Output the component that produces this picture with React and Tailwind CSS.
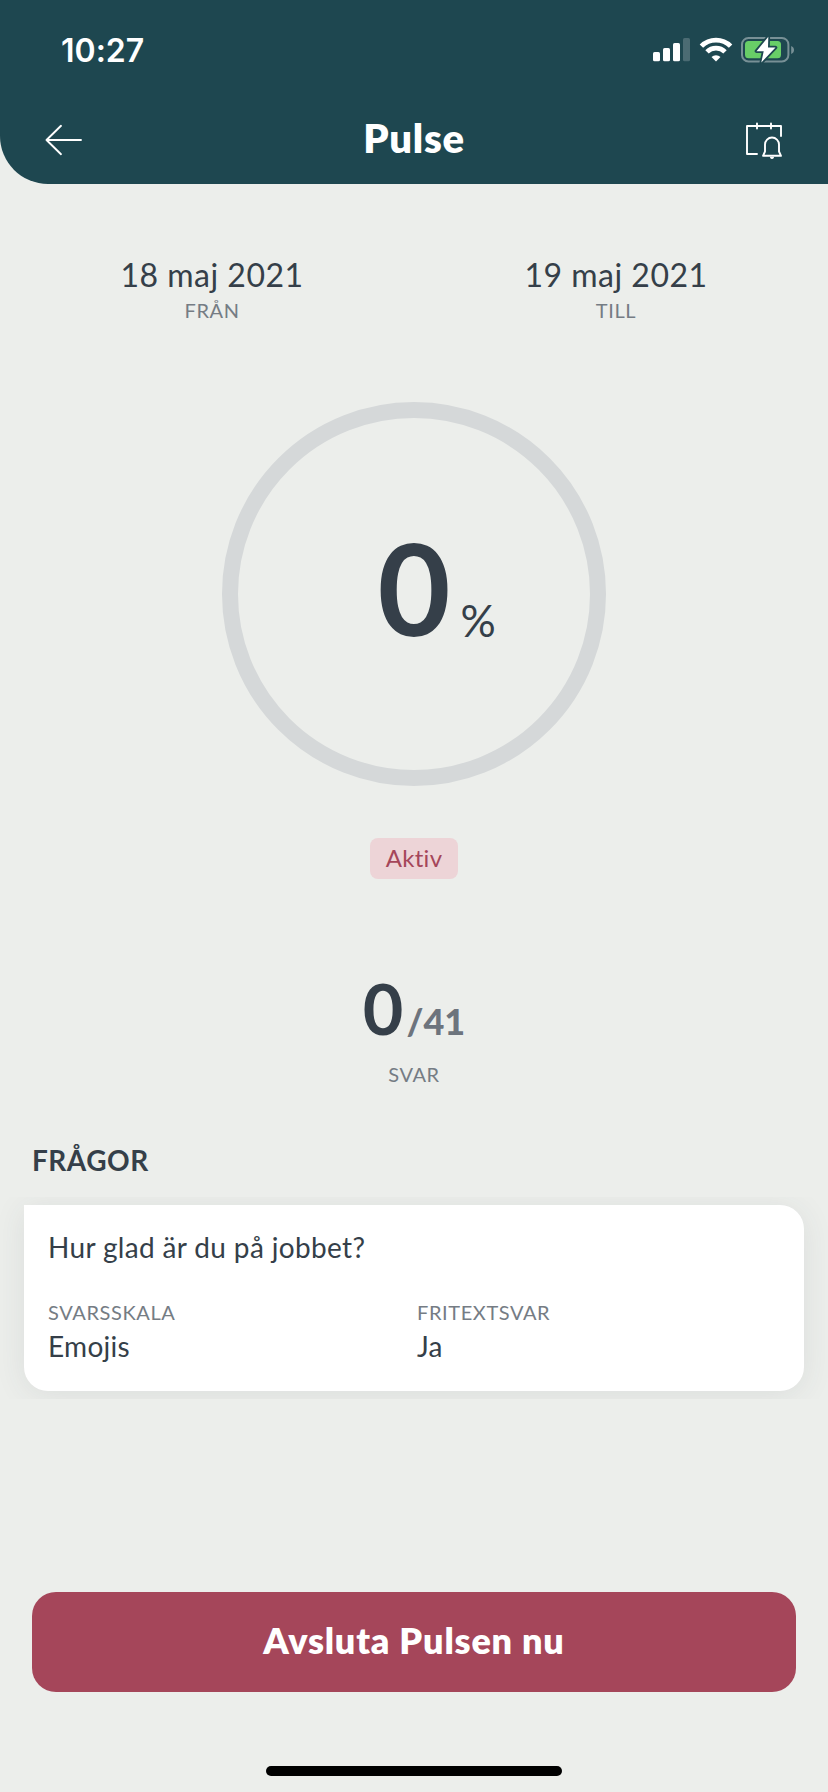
import React from 'react';

const SignalIcon = () => (
  <svg width="38" height="24" viewBox="0 0 38 24">
    <rect x="0" y="14" width="7" height="9.3" rx="1.6" fill="#fff" />
    <rect x="10" y="10" width="7" height="13.3" rx="1.6" fill="#fff" />
    <rect x="20" y="5" width="7" height="18.3" rx="1.6" fill="#fff" />
    <rect x="30" y="0" width="7" height="23.3" rx="1.6" fill="#fff" fillOpacity="0.2" />
  </svg>
);

const WifiIcon = () => (
  <svg width="34" height="26" viewBox="0 0 34 26" fill="none" stroke="#fff" strokeWidth="4.8">
    <path d="M2.4 9.1a20.6 20.6 0 0 1 29.2 0" />
    <path d="M8 14.9a12.8 12.8 0 0 1 18 0" />
    <path d="M17 24.6l-4.500-4.500a6.400 6.400 0 0 1 9 0z" fill="#fff" stroke="none" />
  </svg>
);

const BatteryIcon = () => (
  <svg width="54" height="28" viewBox="0 0 54 28">
    <rect x="1" y="2" width="46.4" height="23.4" rx="6.5" fill="none" stroke="#fff" strokeOpacity="0.4" strokeWidth="2" />
    <path d="M50.2 10v8c1.8-.7 2.8-2.2 2.8-4s-1-3.3-2.8-4z" fill="#fff" fillOpacity="0.4" />
    <rect x="4" y="5" width="36" height="17.3" rx="3.5" fill="#68ce67" />
    <path
      d="M27.3 .8L15.5 15.2h7.2L20.3 26.5 34.5 11.500h-7.500z"
      fill="#fff"
      stroke="#1e4750"
      strokeWidth="3.6"
      strokeLinejoin="round"
      paintOrder="stroke"
    />
  </svg>
);

const BackIcon = () => (
  <svg width="38" height="32" viewBox="0 0 38 32" fill="none" stroke="#fff" strokeWidth="1.9" strokeLinecap="round" strokeLinejoin="round">
    <path d="M36 16H1.5M16 1.8L1.5 16 16 30.2" />
  </svg>
);

const ReminderIcon = () => (
  <svg width="38" height="38" viewBox="0 0 38 38" fill="none" stroke="#fff" strokeWidth="1.9" strokeLinecap="round" strokeLinejoin="round">
    <path d="M12 32H2V4h34v10M12 1.5v5M26 1.5v5" />
    <path d="M20 29.5v-7a7 7 0 0 1 14 0v7l2 4.3H18z" />
    <path d="M26 35.5a1.2 1.2 0 0 0 2 0" />
  </svg>
);

const DateColumn = ({ date, label }) => (
  <div className="flex flex-1 flex-col items-center">
    <span className="text-[32px] leading-10 tracking-[0.5px]">{date}</span>
    <span className="mt-px text-xl leading-7 tracking-[0.6px] text-[#757c84]">{label}</span>
  </div>
);

const Detail = ({ label, value }) => (
  <div className="flex flex-col">
    <span className="text-xl leading-7 tracking-[0.6px] text-[#757c84]">{label}</span>
    <span className="mt-0.5 text-[28px] leading-9 tracking-[0.3px]">{value}</span>
  </div>
);

const App = () => {
  return (
    <div className="flex h-[1792px] w-[828px] flex-col overflow-hidden bg-[#eceeeb] font-['Lato',sans-serif] text-[#353f49] [font-variant-ligatures:none]">
      <header className="h-[184px] rounded-bl-[48px] bg-[#1e4750] text-white">
        <div className="flex h-[100px] items-center justify-between pr-[33px] pl-[61px]">
          <span className="mt-px font-['Inter',sans-serif] text-[32px] leading-10 font-semibold">10:27</span>
          <div className="flex items-center">
            <SignalIcon />
            <div className="ml-2"><WifiIcon /></div>
            <div className="ml-2"><BatteryIcon /></div>
          </div>
        </div>
        <div className="flex h-20 items-center justify-between px-[45px]">
          <BackIcon />
          <h1 className="-mt-1 text-[40px] leading-none font-extrabold tracking-[0.7px]">Pulse</h1>
          <div className="pt-px"><ReminderIcon /></div>
        </div>
      </header>

      <div className="mt-[71px] flex px-2.5">
        <DateColumn date="18 maj 2021" label="FRÅN" />
        <DateColumn date="19 maj 2021" label="TILL" />
      </div>

      <div className="mt-[78px] flex size-[384px] items-center justify-center self-center rounded-full border-[16px] border-[#d5d8d9] pb-3">
        <div className="relative text-[126px] leading-none font-bold">
          0
          <span className="absolute bottom-[9px] left-full ml-2.5 text-[44px] leading-none font-normal">%</span>
        </div>
      </div>

      <div className="mt-[52px] flex h-[41px] w-[88px] items-center justify-center self-center rounded-lg bg-[#edd4d7] pb-0.5 text-2xl leading-none tracking-[0.3px] text-[#a5465a]">
        Aktiv
      </div>

      <div className="mt-[94px] flex h-[71px] items-baseline justify-center leading-[71px]">
        <span className="text-[70px] font-bold">0</span>
        <span className="ml-[3px] text-4xl leading-none font-black text-[#6d747d]">/41</span>
      </div>
      <div className="mt-4 text-center text-xl leading-7 tracking-[0.6px] text-[#757c84]">SVAR</div>

      <h2 className="mt-[54px] px-8 text-[28px] leading-9 font-bold tracking-[0.5px]">FRÅGOR</h2>

      <div className="mt-[19px] overflow-hidden px-6 py-2">
        <div className="h-[186px] rounded-3xl rounded-tl-none bg-white px-6 pt-6 shadow-[0_4px_32px_rgba(53,63,73,0.09)]">
          <p className="text-[28px] leading-9 tracking-[0.35px]">Hur glad är du på jobbet?</p>
          <div className="mt-[33px] grid grid-cols-2 gap-1.5">
            <Detail label="SVARSSKALA" value="Emojis" />
            <Detail label="FRITEXTSVAR" value="Ja" />
          </div>
        </div>
      </div>

      <button className="mx-8 mt-[193px] h-[100px] shrink-0 rounded-3xl bg-[#a5465a] pb-1 text-4xl font-extrabold tracking-[0.8px] text-white">
        Avsluta Pulsen nu
      </button>

      <div className="mt-[74px] h-2.5 w-[296px] self-center rounded-full bg-black" />
    </div>
  );
};

export default App;
